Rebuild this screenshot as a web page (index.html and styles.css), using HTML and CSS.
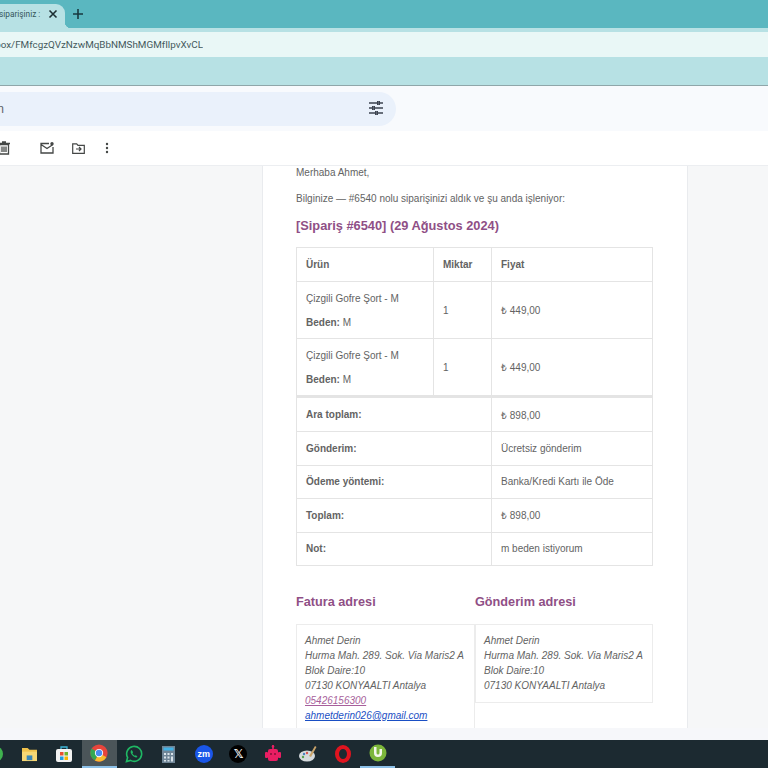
FILE: index.html
```html
<!DOCTYPE html>
<html lang="tr">
<head>
<meta charset="utf-8">
<title>Gmail</title>
<link rel="stylesheet" href="styles.css">
</head>
<body>
<div class="app">
  <div class="tabstrip">
    <div class="tab"><div class="tab-label">siparişiniz :</div>
      <svg class="tab-x" width="10" height="10" viewBox="0 0 10 10"><path d="M1.500 1.500l7 7M8.500 1.500l-7 7" stroke="#1d2f33" stroke-width="1.600"/></svg>
    </div>
    <svg class="tab-plus" width="12" height="12" viewBox="0 0 12 12"><path d="M6 1v10M1 6h10" stroke="#17393f" stroke-width="1.600"/></svg>
  </div>
  <div class="toolbar"><div class="omnibox"><div class="url">box/FMfcgzQVzNzwMqBbNMShMGMfIlpvXvCL</div></div></div>
  <div class="bookmarks"></div>
  <div class="gmail-head">
    <div class="search">
      <div class="search-text">n</div>
      <svg class="tune" width="16" height="16" viewBox="0 0 16 16"><path d="M1 3h8M12 3h3M1 8h3M7 8h8M1 13h6M10 13h5M9.700 1v4M11.300 1v4M4.700 6v4M6.300 6v4M7.700 11v4M9.300 11v4" fill="none" stroke="#3c4350" stroke-width="1.400"/></svg>
    </div>
  </div>
  <div class="actions">
    <svg class="act-trash" width="12" height="14" viewBox="0 0 12 14"><path d="M1.500 3.500h9V13h-9zM0 2.500h12M4 1h4M4 5.500v5.500M6 5.500v5.500M8 5.500v5.500" fill="none" stroke="#444746" stroke-width="1.300"/></svg>
    <svg class="act-mail" width="14" height="12" viewBox="0 0 14 12"><path d="M9 1.500H1v9.500h12V5M1 2.500l6 4 6-4" fill="none" stroke="#444746" stroke-width="1.300"/><circle cx="12" cy="1.800" r="1.700" fill="#444746"/></svg>
    <svg class="act-move" width="13" height="11" viewBox="0 0 13 11"><path d="M.7 10.300V.8h4l1.300 1.500h6.300v8zM4 6h5M7 4l2 2-2 2" fill="none" stroke="#444746" stroke-width="1.200"/></svg>
    <svg class="act-more" width="4" height="12" viewBox="0 0 4 12"><circle cx="2" cy="2" r="1.200" fill="#444746"/><circle cx="2" cy="6" r="1.200" fill="#444746"/><circle cx="2" cy="10" r="1.200" fill="#444746"/></svg>
  </div>
  <div class="content">
    <main class="card">
      <p class="greet">Merhaba Ahmet,</p>
      <p class="lead">Bilginize — #6540 nolu siparişinizi aldık ve şu anda işleniyor:</p>
      <h2 class="order-title">[Sipariş #6540] (29 Ağustos 2024)</h2>
      <table class="order">
        <colgroup><col class="c1"><col class="c2"><col class="c3"></colgroup>
        <thead>
          <tr class="r-head"><th>Ürün</th><th>Miktar</th><th>Fiyat</th></tr>
        </thead>
        <tbody>
          <tr class="r-item"><td><div class="item-name">Çizgili Gofre Şort - M</div><div><b>Beden:</b> M</div></td><td>1</td><td>₺ 449,00</td></tr>
          <tr class="r-item"><td><div class="item-name">Çizgili Gofre Şort - M</div><div><b>Beden:</b> M</div></td><td>1</td><td>₺ 449,00</td></tr>
        </tbody>
        <tfoot>
          <tr class="r-foot r-first"><th colspan="2">Ara toplam:</th><td>₺ 898,00</td></tr>
          <tr class="r-foot"><th colspan="2">Gönderim:</th><td>Ücretsiz gönderim</td></tr>
          <tr class="r-foot"><th colspan="2">Ödeme yöntemi:</th><td>Banka/Kredi Kartı ile Öde</td></tr>
          <tr class="r-foot"><th colspan="2">Toplam:</th><td>₺ 898,00</td></tr>
          <tr class="r-foot"><th colspan="2">Not:</th><td>m beden istiyorum</td></tr>
        </tfoot>
      </table>
      <div class="addresses">
        <section class="addr">
          <h2 class="addr-title">Fatura adresi</h2>
          <address class="addr-box">Ahmet Derin<br>Hurma Mah. 289. Sok. Via Maris2 A<br>Blok Daire:10<br>07130 KONYAALTI Antalya<br><a class="tel" href="#">05426156300</a><br><a class="mail" href="#">ahmetderin026@gmail.com</a></address>
        </section>
        <section class="addr addr-right">
          <h2 class="addr-title">Gönderim adresi</h2>
          <address class="addr-box">Ahmet Derin<br>Hurma Mah. 289. Sok. Via Maris2 A<br>Blok Daire:10<br>07130 KONYAALTI Antalya</address>
        </section>
      </div>
    </main>
  </div>
  <div class="bottom-gap"></div>
  <footer class="taskbar">
    <div class="slot slot-first"><svg width="20" height="20" viewBox="0 0 20 20"><circle cx="10" cy="10" r="8" fill="#3fb24f"/></svg></div>
    <div class="slot"><svg width="17" height="15" viewBox="0 0 18 16"><path d="M1 1h6l2 2h8v12H1z" fill="#f0c24c"/><rect x="1" y="5" width="16" height="10" fill="#f7d774"/><rect x="6" y="9" width="6" height="5" fill="#3a87b8"/></svg></div>
    <div class="slot"><svg width="18" height="18" viewBox="0 0 18 18"><path d="M6 4V2h6v2" fill="none" stroke="#3fb6d8" stroke-width="1.300"/><rect x="1" y="4" width="16" height="13" rx="2" fill="#f2f2f2"/><rect x="5" y="7" width="3.500" height="3.500" fill="#e8502f"/><rect x="9.500" y="7" width="3.500" height="3.500" fill="#6fb52c"/><rect x="5" y="11.500" width="3.500" height="3.500" fill="#1f9be0"/><rect x="9.500" y="11.500" width="3.500" height="3.500" fill="#f7b500"/></svg></div>
    <div class="slot slot-active"><svg width="18" height="18" viewBox="0 0 48 48"><circle cx="24" cy="24" r="23" fill="#e8453c"/><path d="M24 24L44 35A23 23 0 0 1 13 44z" fill="#f9bb2d"/><path d="M24 24L13 44A23 23 0 0 1 4 12z" fill="#34a853"/><circle cx="24" cy="24" r="11" fill="#fff"/><circle cx="24" cy="24" r="8.500" fill="#4a8cf0"/></svg></div>
    <div class="slot"><svg width="18" height="18" viewBox="0 0 18 18"><path d="M1.500 16.500l1.100-4A7.500 7.500 0 1 1 5.500 15.400z" fill="none" stroke="#1fb864" stroke-width="1.600"/><path d="M6 5.500c-1 1.500 0 3.500 1.500 5s3.500 2.500 5 1.500l-1.500-1.800-1.200.6c-1-.5-2-1.500-2.400-2.500l.7-1.100L6.800 5z" fill="#1fb864"/></svg></div>
    <div class="slot"><svg width="13" height="17" viewBox="0 0 13 17"><rect width="13" height="17" fill="#6f8596"/><rect x="1.500" y="1.500" width="10" height="3" fill="#43b2e6"/><path d="M2 7h2v2H2zM5.500 7h2v2h-2zM9 7h2v2H9zM2 10.500h2v2H2zM5.500 10.500h2v2h-2zM9 10.500h2v5H9zM2 14h2v1.500H2zM5.500 14h2v1.500h-2z" fill="#d9e3ea"/></svg></div>
    <div class="slot"><div class="zm">zm</div></div>
    <div class="slot"><div class="xlogo">𝕏</div></div>
    <div class="slot"><svg width="16" height="18" viewBox="0 0 16 18"><path d="M8 0v4" stroke="#e91e63" stroke-width="1.600"/><circle cx="8" cy="1.500" r="1.300" fill="#e91e63"/><rect x="3" y="4" width="10" height="12" rx="2" fill="#e91e63"/><rect y="7" width="3" height="6" rx="1" fill="#e91e63"/><rect x="13" y="7" width="3" height="6" rx="1" fill="#e91e63"/><circle cx="6" cy="9" r=".9" fill="#7b1035"/><circle cx="10" cy="9" r=".9" fill="#7b1035"/></svg></div>
    <div class="slot"><svg width="18" height="18" viewBox="0 0 18 18"><ellipse cx="8" cy="11" rx="8" ry="5.500" fill="#d5dadd"/><circle cx="5" cy="9" r="1.200" fill="#4a7fc0"/><circle cx="8" cy="8" r="1.200" fill="#d9534f"/><circle cx="4" cy="12" r="1.200" fill="#59a14f"/><path d="M10 11L16 1l1.500 1L12 12z" fill="#c9a36a"/></svg></div>
    <div class="slot"><svg width="16" height="18" viewBox="0 0 16 18"><ellipse cx="8" cy="9" rx="6" ry="7" fill="none" stroke="#e0141f" stroke-width="4"/></svg></div>
    <div class="slot slot-running"><svg width="18" height="18" viewBox="0 0 18 18"><circle cx="9" cy="9" r="8.500" fill="#7cb63b"/><path d="M5 3v6a4 4 0 0 0 8 0V5h-2.500v4a1.500 1.500 0 0 1-3 0V3z" fill="#f3f7ec"/></svg></div>
  </footer>
</div>
</body>
</html>
```
FILE: styles.css
```css
* { box-sizing: border-box; }
html, body { margin: 0; padding: 0; }
body { width: 768px; height: 768px; overflow: hidden; font-family: "Liberation Sans", Arial, sans-serif; }
.app { display: flex; flex-direction: column; width: 768px; height: 768px; overflow: hidden; }

.tabstrip { height: 28px; background: #5ab7c0; display: flex; align-items: flex-end; }
.tab { width: 65px; height: 24px; background: #b7e1e4; border-radius: 0 9px 0 0; display: flex; align-items: center; position: relative; padding-bottom: 4px; }
.tab::after { content: ""; position: absolute; left: 100%; bottom: 0; width: 6px; height: 6px; background: radial-gradient(circle at 100% 0, transparent 6px, #b7e1e4 6.500px); }
.tab-label { width: 48px; margin-left: -1px; white-space: nowrap; font: 8.300px "Roboto", sans-serif; color: #34555a; flex: none; }
.tab-x { margin-left: 1px; }
.tab-plus { margin: 0 0 8px 7px; }

.toolbar { height: 29px; background: #b7e1e4; padding: 4px 0 0; }
.omnibox { height: 25px; background: #e9f7f6; display: flex; align-items: center; }
.url { width: 203px; overflow: hidden; display: flex; justify-content: flex-end; white-space: nowrap; font: 9.850px "Roboto", sans-serif; color: #44595c; flex: none; }

.bookmarks { height: 29px; background: #b7e1e4; border-bottom: 1px solid #8fa6a9; }

.gmail-head { height: 45px; background: #f8fafd; padding-top: 6px; }
.search { width: 396px; height: 34px; background: #eaf1fb; border-radius: 0 17px 17px 0; display: flex; align-items: center; }
.search-text { width: 4px; overflow: hidden; display: flex; justify-content: flex-end; white-space: nowrap; font-size: 12px; color: #5f6368; flex: none; }
.tune { margin: 0 0 2px 364px; }

.actions { height: 35px; background: #fff; display: flex; align-items: center; border-bottom: 1px solid #eceef1; }
.act-trash { margin-left: -2px; }
.act-mail { margin-left: 30px; }
.act-move { margin-left: 18px; }
.act-more { margin-left: 20px; }

.content { height: 562px; background: #f6f7f8; padding-left: 262px; overflow: hidden; }
.card { width: 426px; height: 100%; background: #fff; padding: 1px 33px 0; border-left: 1px solid #e9ebee; border-right: 1px solid #e9ebee; color: #636363; font-size: 10px; overflow: hidden; }
.greet { margin: 0; height: 12px; line-height: 12px; }
.lead { margin: 14px 0 0; line-height: 12px; }
.order-title { margin: 13px 0 0; font-size: 12.800px; line-height: 16px; color: #8f4f86; font-weight: bold; }
.order { margin-top: 13px; width: 356px; border-collapse: collapse; table-layout: fixed; border: 1px solid #e4e4e4; font-size: 10px; }
.c1 { width: 137px; }
.c2 { width: 58px; }
.c3 { width: 161px; }
.order th, .order td { border: 1px solid #e4e4e4; padding: 0 9px; text-align: left; vertical-align: middle; color: #636363; }
.order th { font-weight: bold; }
.r-head { height: 34px; }
.r-item { height: 57px; }
.r-item + .r-item { height: 58px; }
.item-name { margin-bottom: 13px; }
.r-foot { height: 33.500px; }
.r-foot.r-first { height: 35px; }
.r-first th, .r-first td { border-top: 3px solid #e4e4e4; }
.addresses { display: flex; margin-top: 28px; }
.addr { width: 179px; }
.addr-right { width: 178px; }
.addr-title { margin: 0; font-size: 12.700px; line-height: 16px; color: #8f4f86; font-weight: bold; }
.addr-box { margin-top: 14px; padding: 8px 8px 9px 8px; border: 1px solid #ececec; font-style: italic; font-size: 10px; line-height: 15px; color: #636363; }
.tel { color: #a75f9b; }
.mail { color: #1a4fc4; }

.bottom-gap { height: 12px; background: #f6f7fa; }

.taskbar { height: 28px; background: #1c2a31; display: flex; align-items: center; }
.slot { width: 34.800px; height: 28px; display: flex; align-items: center; justify-content: center; flex: none; }
.slot-first { margin-left: -22.500px; }
.slot-active { background: #4b5559; border-bottom: 2px solid #8cc0e8; }
.slot-running { border-bottom: 2px solid #8cc0e8; }
.zm { width: 18px; height: 18px; border-radius: 50%; background: #1a56e8; color: #fff; font: bold 9px/18px "Liberation Sans", sans-serif; text-align: center; }
.xlogo { width: 18px; height: 18px; border-radius: 50%; background: #000; color: #fff; font: bold 12px/18px "DejaVu Sans", sans-serif; text-align: center; }
```
